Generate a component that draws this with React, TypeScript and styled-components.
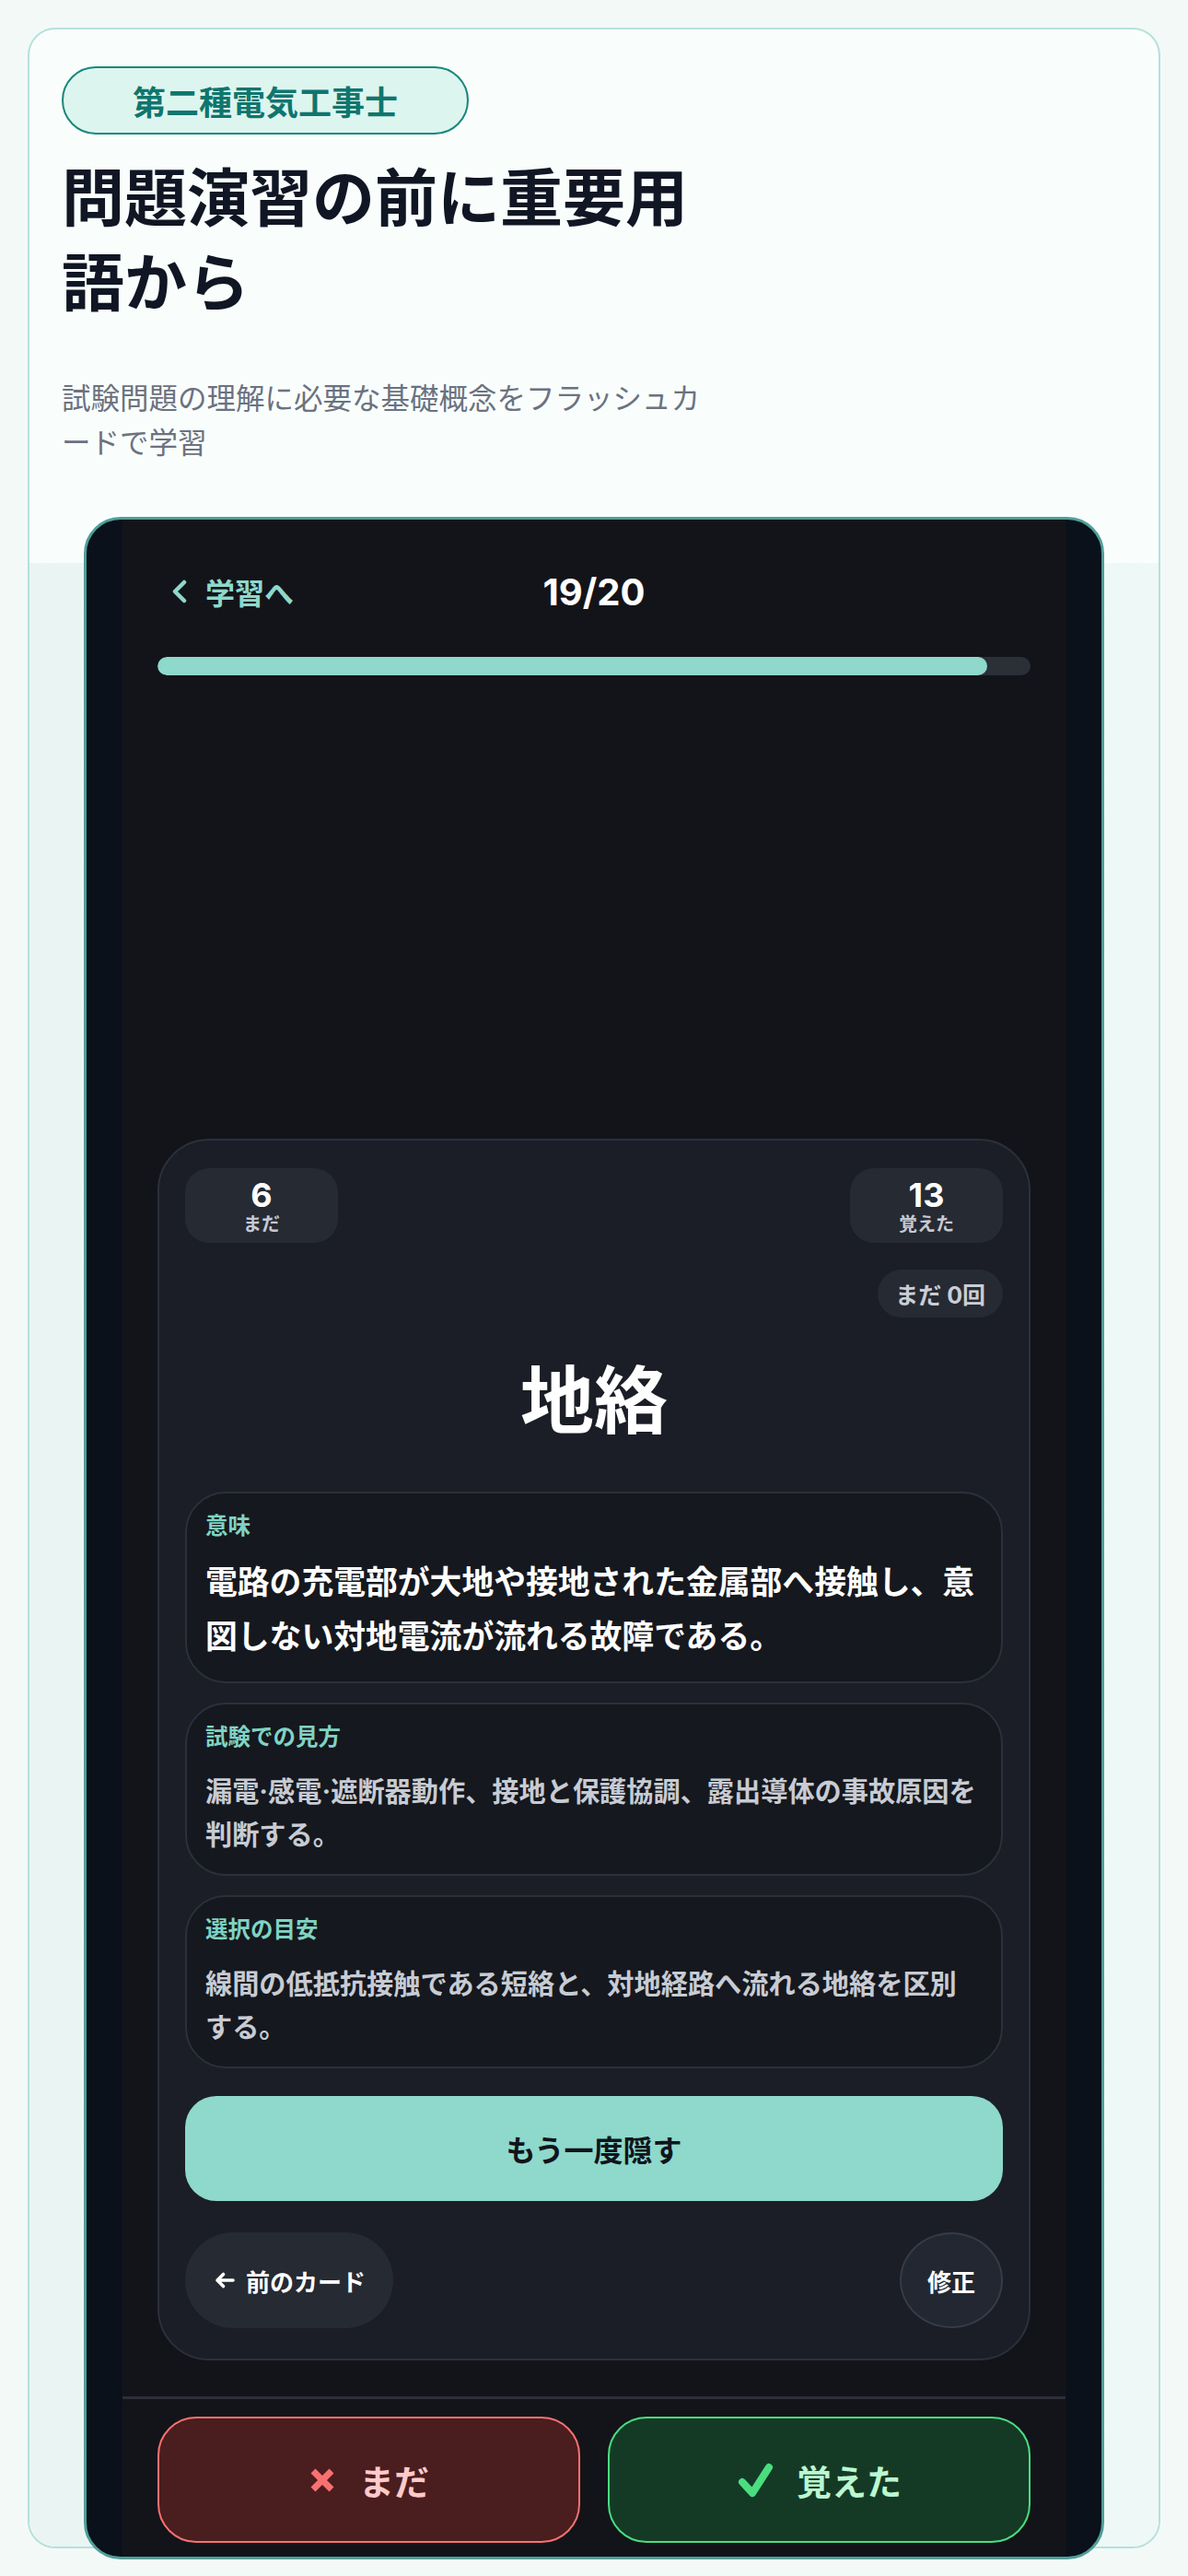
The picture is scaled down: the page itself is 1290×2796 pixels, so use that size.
import styled, { createGlobalStyle } from 'styled-components';

interface InfoSection {
  label: string;
  body: string;
  lead?: boolean;
}

const sections: InfoSection[] = [
  {
    label: '意味',
    body: '電路の充電部が大地や接地された金属部へ接触し、意図しない対地電流が流れる故障である。',
    lead: true,
  },
  {
    label: '試験での見方',
    body: '漏電·感電·遮断器動作、接地と保護協調、露出導体の事故原因を判断する。',
  },
  {
    label: '選択の目安',
    body: '線間の低抵抗接触である短絡と、対地経路へ流れる地絡を区別する。',
  },
];

const progress = { current: 19, total: 20 };

const GlobalStyle = createGlobalStyle`
  * {
    box-sizing: border-box;
  }

  body {
    margin: 0;
    background: #f3f9f7;
    font-family: 'Inter', 'Noto Sans CJK JP', sans-serif;
  }
`;

const Page = styled.div`
  padding: 30px;
`;

const Panel = styled.main`
  background: #f9fefd;
  border: 2px solid #b5e1db;
  border-radius: 30px;
`;

const Hero = styled.header`
  padding: 40px 35px 106px;
`;

const Badge = styled.span`
  display: inline-flex;
  align-items: center;
  height: 74px;
  padding: 0 75px;
  border: 2px solid #17877a;
  border-radius: 37px;
  background: #ddf5ef;
  color: #0f766e;
  font-size: 36px;
  font-weight: 700;
`;

const Title = styled.h1`
  margin: 23px 0 0;
  max-width: 720px;
  font-size: 68px;
  line-height: 92px;
  font-weight: 700;
  color: #101623;
`;

const Lead = styled.p`
  margin: 56px 0 0;
  max-width: 720px;
  font-size: 31.5px;
  line-height: 48px;
  color: #6b7280;
  line-break: anywhere;
`;

const Preview = styled.section`
  display: flow-root;
  padding: 0 59px;
  background: linear-gradient(90deg, #eaf5f3, #eef8f6);
  border-radius: 0 0 28px 28px;
`;

const Phone = styled.div`
  margin: -50px 0 -14px;
  padding: 0 39px;
  background: #0a111b;
  border: 3px solid #4f9f98;
  border-radius: 40px;
`;

const Screen = styled.div`
  height: 2211px;
  display: flex;
  flex-direction: column;
  background: #131419;
`;

const TopBar = styled.div`
  display: grid;
  grid-template-columns: 1fr auto 1fr;
  align-items: center;
  height: 60px;
  margin-top: 48px;
  padding: 0 38px;
`;

const BackLink = styled.span`
  display: inline-flex;
  align-items: center;
  gap: 18px;
  padding-left: 14px;
  color: #8ed8cc;
  font-size: 32px;
  font-weight: 700;
`;

const Counter = styled.span`
  color: #ffffff;
  font-size: 40px;
  font-weight: 700;
`;

const Track = styled.div`
  height: 20px;
  margin: 41px 38px 0;
  border-radius: 10px;
  background: #2a2f38;
  overflow: hidden;
`;

const Fill = styled.div`
  height: 100%;
  border-radius: 10px;
  background: #8ed8cc;
`;

const Body = styled.div`
  flex: 1;
  display: flex;
  flex-direction: column;
  justify-content: flex-end;
  padding: 0 38px 39px;
`;

const Card = styled.section`
  padding: 30px 28px 33px;
  background: #1b1e26;
  border: 2px solid #2b303b;
  border-radius: 56px;
`;

const StatsRow = styled.div`
  display: flex;
  justify-content: space-between;
`;

const StatPill = styled.div`
  width: 166px;
  height: 81px;
  display: flex;
  flex-direction: column;
  align-items: center;
  justify-content: center;
  border-radius: 26px;
  background: #262a33;
`;

const StatValue = styled.span`
  color: #ffffff;
  font-size: 36px;
  line-height: 40px;
  font-weight: 700;
`;

const StatLabel = styled.span`
  color: #c5c9d2;
  font-size: 20px;
  line-height: 24px;
  font-weight: 700;
`;

const MissRow = styled.div`
  display: flex;
  justify-content: flex-end;
  margin-top: 29px;
`;

const MissChip = styled.span`
  display: inline-flex;
  align-items: center;
  height: 52px;
  padding: 0 19px;
  border-radius: 26px;
  background: #262a33;
  color: #c9ced6;
  font-size: 25px;
  font-weight: 700;
`;

const Term = styled.h2`
  margin: 42px 0 0;
  text-align: center;
  color: #ffffff;
  font-size: 80px;
  line-height: 96px;
  font-weight: 700;
`;

const InfoList = styled.div`
  display: flex;
  flex-direction: column;
  gap: 21px;
  margin-top: 51px;
`;

const InfoBox = styled.div`
  padding: 20px 24px 19px 20px;
  background: #15181e;
  border: 2px solid #2b303b;
  border-radius: 44px;
`;

const InfoLabel = styled.div`
  color: #7fd3c3;
  font-size: 24.5px;
  line-height: 31px;
  font-weight: 700;
`;

const InfoText = styled.p<{ $lead?: boolean }>`
  margin: ${({ $lead }) => ($lead ? '16px' : '21px')} 0 0;
  color: ${({ $lead }) => ($lead ? '#ffffff' : '#c7cbd3')};
  font-size: ${({ $lead }) => ($lead ? '34.8px' : '29.2px')};
  line-height: ${({ $lead }) => ($lead ? '59px' : '46.5px')};
  font-weight: 700;
`;

const RevealButton = styled.button`
  width: 100%;
  height: 114px;
  margin-top: 30px;
  border: none;
  border-radius: 34px;
  background: #8ed8cc;
  color: #11151a;
  font-family: inherit;
  font-size: 32px;
  font-weight: 700;
`;

const NavRow = styled.div`
  display: flex;
  justify-content: space-between;
  margin-top: 34px;
`;

const PrevButton = styled.button`
  display: inline-flex;
  align-items: center;
  gap: 11px;
  height: 104px;
  padding: 0 30px 0 31px;
  border: none;
  border-radius: 52px;
  background: #262a33;
  color: #ffffff;
  font-family: inherit;
  font-size: 26px;
  font-weight: 700;
`;

const EditButton = styled.button`
  width: 112px;
  height: 104px;
  border: 2px solid #363b47;
  border-radius: 50%;
  background: #232731;
  color: #ffffff;
  font-family: inherit;
  font-size: 26px;
  font-weight: 700;
`;

const ActionBar = styled.div`
  display: grid;
  grid-template-columns: 1fr 1fr;
  gap: 30px;
  padding: 19px 38px 15px;
  border-top: 3px solid #2a2f38;
`;

const tones = {
  miss: { bg: '#4a1d1f', line: '#f87171', text: '#fecaca' },
  got: { bg: '#143a26', line: '#4ade80', text: '#bbf7d0' },
};

const VerdictButton = styled.button<{ $tone: keyof typeof tones }>`
  display: inline-flex;
  align-items: center;
  justify-content: center;
  gap: 25px;
  height: 137px;
  border: 2px solid ${({ $tone }) => tones[$tone].line};
  border-radius: 42px;
  background: ${({ $tone }) => tones[$tone].bg};
  color: ${({ $tone }) => tones[$tone].text};
  font-family: inherit;
  font-size: 38px;
  font-weight: 700;

  svg {
    color: ${({ $tone }) => tones[$tone].line};
  }
`;

const App = () => {
  return (
    <Page lang="ja">
      <GlobalStyle />
      <Panel>
        <Hero>
          <Badge>第二種電気工事士</Badge>
          <Title>問題演習の前に重要用語から</Title>
          <Lead>試験問題の理解に必要な基礎概念をフラッシュカードで学習</Lead>
        </Hero>

        <Preview>
          <Phone>
            <Screen>
              <TopBar>
                <BackLink>
                  <svg width="20" height="26" viewBox="0 0 20 26" fill="none">
                    <path
                      d="M15 3 L5 13 L15 23"
                      stroke="currentColor"
                      strokeWidth="4.5"
                      strokeLinecap="round"
                      strokeLinejoin="round"
                    />
                  </svg>
                  学習へ
                </BackLink>
                <Counter>
                  {progress.current}/{progress.total}
                </Counter>
                <span />
              </TopBar>

              <Track>
                <Fill style={{ width: `${(progress.current / progress.total) * 100}%` }} />
              </Track>

              <Body>
                <Card>
                  <StatsRow>
                    <StatPill>
                      <StatValue>6</StatValue>
                      <StatLabel>まだ</StatLabel>
                    </StatPill>
                    <StatPill>
                      <StatValue>13</StatValue>
                      <StatLabel>覚えた</StatLabel>
                    </StatPill>
                  </StatsRow>

                  <MissRow>
                    <MissChip>まだ 0回</MissChip>
                  </MissRow>

                  <Term>地絡</Term>

                  <InfoList>
                    {sections.map((section) => (
                      <InfoBox key={section.label}>
                        <InfoLabel>{section.label}</InfoLabel>
                        <InfoText $lead={section.lead}>{section.body}</InfoText>
                      </InfoBox>
                    ))}
                  </InfoList>

                  <RevealButton>もう一度隠す</RevealButton>

                  <NavRow>
                    <PrevButton>
                      <svg width="24" height="20" viewBox="0 0 24 20" fill="none">
                        <path
                          d="M21 10 H4 M10.5 3.5 L4 10 L10.5 16.5"
                          stroke="currentColor"
                          strokeWidth="3.6"
                          strokeLinecap="round"
                          strokeLinejoin="round"
                        />
                      </svg>
                      前のカード
                    </PrevButton>
                    <EditButton>修正</EditButton>
                  </NavRow>
                </Card>
              </Body>

              <ActionBar>
                <VerdictButton $tone="miss">
                  <svg width="30" height="30" viewBox="0 0 30 30" fill="none">
                    <path d="M5 5 L25 25 M25 5 L5 25" stroke="currentColor" strokeWidth="7" />
                  </svg>
                  まだ
                </VerdictButton>
                <VerdictButton $tone="got">
                  <svg width="40" height="40" viewBox="0 0 40 40" fill="none">
                    <path
                      d="M6 22 L17 34 L35 6"
                      stroke="currentColor"
                      strokeWidth="8"
                      strokeLinecap="round"
                      strokeLinejoin="round"
                    />
                  </svg>
                  覚えた
                </VerdictButton>
              </ActionBar>
            </Screen>
          </Phone>
        </Preview>
      </Panel>
    </Page>
  );
};

export default App;
